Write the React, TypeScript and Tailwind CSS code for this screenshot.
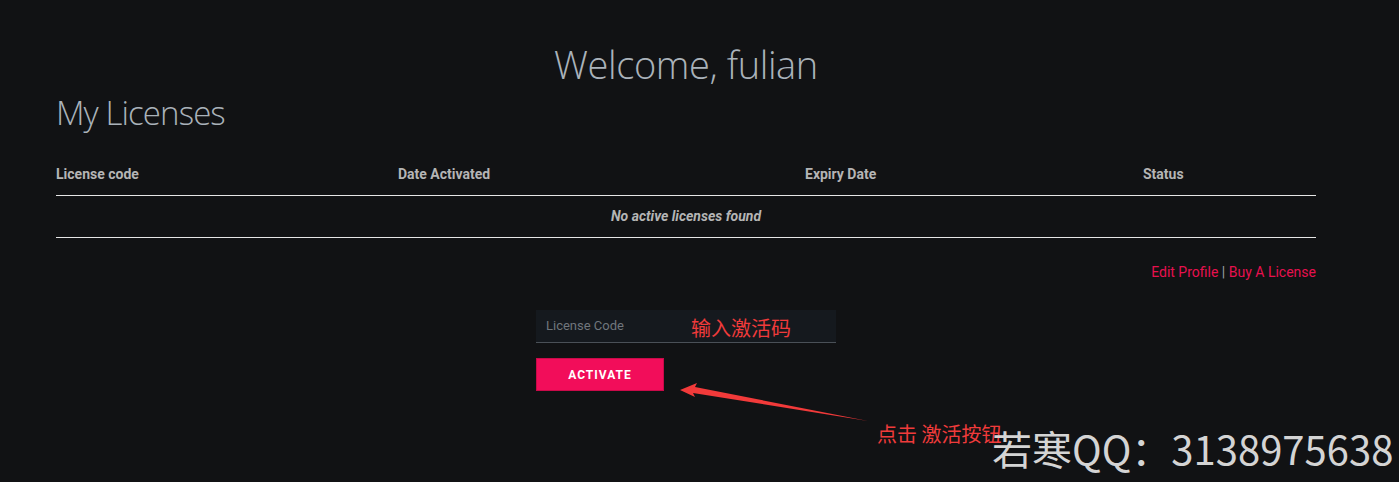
export default function App() {
  return (
    <div className="relative w-[1399px] h-[482px] overflow-hidden bg-[#111214] font-['Roboto',sans-serif]">
      <div className="ml-[56px] w-[1260px] pt-[38px]">
        {/* Greeting */}
        <h1 className="text-center text-[38px] leading-[52px] font-light tracking-[-0.4px] text-[#aab2ba] font-['Open_Sans',sans-serif]">
          Welcome, fulian
        </h1>
        <h2 className="text-[33px] leading-[46px] font-light tracking-[-0.9px] text-[#aab2ba] font-['Open_Sans',sans-serif]">
          My Licenses
        </h2>

        {/* Licenses table */}
        <table className="mt-[28px] w-full border-collapse">
          <thead>
            <tr className="border-b border-[#e6e6e6] text-left text-[14px] font-bold text-[#b5b5b5]">
              <th className="w-[342px] pb-[10px] pt-0 font-bold">License code</th>
              <th className="w-[407px] pb-[10px] font-bold">Date Activated</th>
              <th className="w-[338px] pb-[10px] font-bold">Expiry Date</th>
              <th className="pb-[10px] font-bold">Status</th>
            </tr>
          </thead>
          <tbody>
            <tr className="border-b border-[#e6e6e6]">
              <td colSpan={4} className="h-[42px] text-center text-[14px] font-bold italic text-[#b5b5b5]">
                No active licenses found
              </td>
            </tr>
          </tbody>
        </table>

        <div className="mt-[24px] text-right text-[14px] text-[#9aa0a6]">
          <a className="text-[#e8104f]">Edit Profile</a> | <a className="text-[#e8104f]">Buy A License</a>
        </div>

        {/* Activation form */}
        <div className="mt-[27px] flex flex-col items-center">
          <div className="flex w-[300px] flex-col gap-[15px]">
            <div className="h-[33px] bg-[#15191e] border-b border-[#4a5057] px-[10px] flex items-center text-[13px] text-[#70767c]">
              License Code
            </div>
            <button className="h-[33px] w-[128px] bg-[#f20d5a] border border-[#c90a49] text-white text-[12px] font-bold tracking-[1px]">
              ACTIVATE
            </button>
          </div>
        </div>
      </div>

      {/* Screenshot annotations */}
      <span className="absolute left-[691px] top-[314px] text-[20px] leading-[28px] text-[#f03b3b] font-['Noto_Sans_CJK_SC',sans-serif]">
        输入激活码
      </span>
      <svg className="absolute left-0 top-0" width="1399" height="482">
        <polygon points="680,390 697,383 695,387 868,421 693,393 695,397" fill="#f23a3a" />
      </svg>
      <span className="absolute left-[877px] top-[420px] text-[20px] leading-[28px] text-[#f03b3b] font-['Noto_Sans_CJK_SC',sans-serif]">
        点击 激活按钮
      </span>
      <span className="absolute left-[992px] top-[420px] text-[40px] leading-[56px] text-[#d4d4d4] font-['Noto_Sans_CJK_SC',sans-serif]">
        若寒QQ：3138975638
      </span>
    </div>
  );
}
